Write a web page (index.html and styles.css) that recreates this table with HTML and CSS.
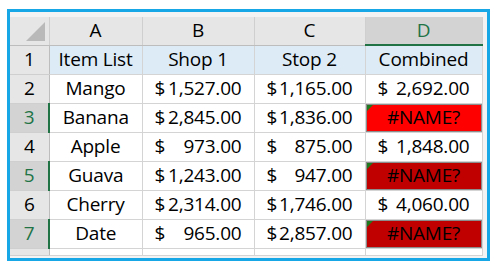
FILE: index.html
```html
<!DOCTYPE html>
<html>
<head>
<meta charset="utf-8">
<link rel="stylesheet" href="styles.css">
</head>
<body>
<div class="frame">
  <table class="sheet">
    <colgroup>
      <col class="c-rh"><col class="c-a"><col class="c-b"><col class="c-c"><col class="c-d">
    </colgroup>
    <tr class="colhead">
      <th class="corner"><span class="tri"></span></th>
      <th>A</th><th>B</th><th>C</th><th class="sel-col">D</th>
    </tr>
    <tr class="titles">
      <th class="rh">1</th>
      <td>Item List</td><td>Shop 1</td><td>Stop 2</td><td>Combined</td>
    </tr>
    <tr>
      <th class="rh">2</th>
      <td>Mango</td>
      <td class="acc"><span>$</span><span>1,527.00</span></td>
      <td class="acc"><span>$</span><span>1,165.00</span></td>
      <td class="acc"><span>$</span><span>2,692.00</span></td>
    </tr>
    <tr>
      <th class="rh sel-row">3</th>
      <td>Banana</td>
      <td class="acc"><span>$</span><span>2,845.00</span></td>
      <td class="acc"><span>$</span><span>1,836.00</span></td>
      <td class="err bright"><span class="flag"></span>#NAME?</td>
    </tr>
    <tr>
      <th class="rh">4</th>
      <td>Apple</td>
      <td class="acc"><span>$</span><span>973.00</span></td>
      <td class="acc"><span>$</span><span>875.00</span></td>
      <td class="acc"><span>$</span><span>1,848.00</span></td>
    </tr>
    <tr>
      <th class="rh sel-row">5</th>
      <td>Guava</td>
      <td class="acc"><span>$</span><span>1,243.00</span></td>
      <td class="acc"><span>$</span><span>947.00</span></td>
      <td class="err"><span class="flag"></span>#NAME?</td>
    </tr>
    <tr>
      <th class="rh">6</th>
      <td>Cherry</td>
      <td class="acc"><span>$</span><span>2,314.00</span></td>
      <td class="acc"><span>$</span><span>1,746.00</span></td>
      <td class="acc"><span>$</span><span>4,060.00</span></td>
    </tr>
    <tr>
      <th class="rh sel-row">7</th>
      <td>Date</td>
      <td class="acc"><span>$</span><span>965.00</span></td>
      <td class="acc"><span>$</span><span>2,857.00</span></td>
      <td class="err"><span class="flag"></span>#NAME?</td>
    </tr>
    <tr class="partial">
      <th class="rh"></th><td></td><td></td><td></td><td></td>
    </tr>
  </table>
</div>
</body>
</html>
```

FILE: styles.css
```css
html, body {
  margin: 0;
  padding: 0;
  background: #ffffff;
}

.frame {
  margin: 9px 0 0 7px;
  width: 477px;
  height: 241px;
  border: 3px solid #17a6e6;
  background: #f3f3f3;
  padding-top: 5px;
  box-sizing: content-box;
  overflow: hidden;
}

.sheet {
  border-collapse: collapse;
  table-layout: fixed;
  width: 472px;
  font-family: "Open Sans", "Liberation Sans", sans-serif;
  font-size: 19px;
  line-height: 1;
  letter-spacing: -0.2px;
  color: #000000;
}

.c-rh { width: 39px; }
.c-a { width: 93px; }
.c-b { width: 112px; }
.c-c { width: 111px; }
.c-d { width: 117px; }

.sheet th,
.sheet td {
  padding: 0;
  text-align: center;
  vertical-align: middle;
  font-weight: normal;
  height: 28px;
  white-space: nowrap;
}

.sheet td {
  border: 1px solid #d4d4d4;
  background: #ffffff;
}

.colhead th {
  background: #e6e6e6;
  border-right: 1px solid #cfcfcf;
  border-bottom: 1px solid #bdbdbd;
  height: 27px;
}

.colhead th.sel-col {
  background: #d3d3d3;
  color: #217346;
  border-bottom: 2px solid #217346;
}

.corner {
  position: relative;
}

.tri {
  position: absolute;
  right: 4px;
  bottom: 4px;
  width: 0;
  height: 0;
  border-left: 19px solid transparent;
  border-bottom: 19px solid #b9b9b9;
}

.sheet th.rh {
  background: #e6e6e6;
  border-right: 1px solid #bdbdbd;
  border-bottom: 1px solid #cfcfcf;
}

.sheet th.sel-row {
  background: #d3d3d3;
  color: #217346;
  border-right: 2px solid #217346;
}

.titles td {
  background: #ddebf7;
  height: 27px;
}

.acc {
  text-align: left;
}

.acc span:first-child {
  float: left;
  padding-left: 12px;
}

.acc span:last-child {
  float: right;
  padding-right: 12px;
}

.sheet td.err {
  position: relative;
  background: #c00000;
  border: 1px solid #d4d4d4;
  box-shadow: inset 0 0 0 1px #8c8c8c;
}

.sheet td.err.bright {
  background: #ff0000;
}

.flag {
  position: absolute;
  left: 1px;
  top: 1px;
  width: 0;
  height: 0;
  border-top: 6px solid #1f7a1f;
  border-right: 6px solid transparent;
}

.partial th,
.partial td {
  height: 6px;
  font-size: 1px;
}
```
